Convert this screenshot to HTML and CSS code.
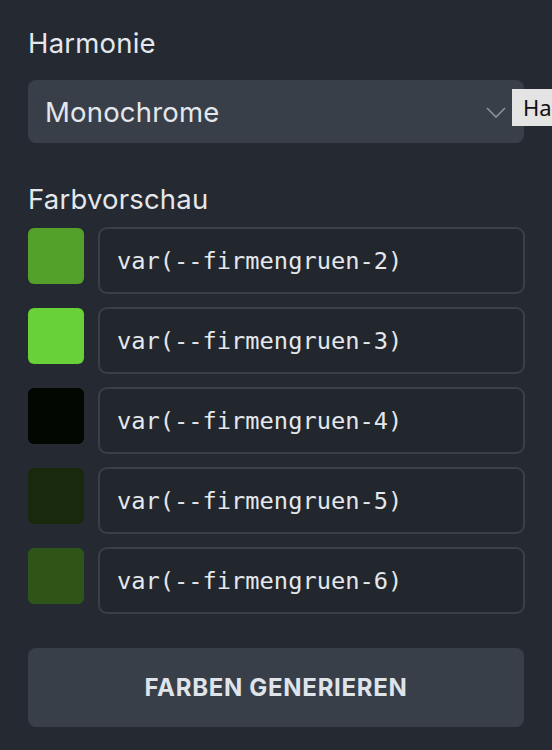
FILE: index.html
```html
<!DOCTYPE html>
<html lang="de">
<head>
<meta charset="utf-8">
<link rel="stylesheet" href="styles.css">
</head>
<body>
<div class="panel">
  <label class="field-label">Harmonie</label>
  <div class="select-wrap">
    <div class="select">
      <span>Monochrome</span>
      <svg class="chevron" width="20" height="12" viewBox="0 0 20 12"><polyline points="1,1 10,10 19,1" fill="none" stroke="#8b919b" stroke-width="1.6"/></svg>
    </div>
    <div class="tooltip">Harmonie</div>
  </div>

  <label class="field-label preview-label">Farbvorschau</label>
  <div class="rows">
    <div class="row"><div class="swatch" style="background:#53a12a"></div><div class="code">var(--firmengruen-2)</div></div>
    <div class="row"><div class="swatch" style="background:#67d137"></div><div class="code">var(--firmengruen-3)</div></div>
    <div class="row"><div class="swatch" style="background:#020702"></div><div class="code">var(--firmengruen-4)</div></div>
    <div class="row"><div class="swatch" style="background:#19290d"></div><div class="code">var(--firmengruen-5)</div></div>
    <div class="row"><div class="swatch" style="background:#2e5517"></div><div class="code">var(--firmengruen-6)</div></div>
  </div>

  <button class="generate">FARBEN GENERIEREN</button>
</div>
</body>
</html>
```
FILE: styles.css
```css
html, body {
  margin: 0;
  padding: 0;
  background: #242932;
  overflow: hidden;
}
body {
  font-family: Inter, "Noto Sans", sans-serif;
  color: #e4e7ec;
}
.panel {
  padding: 27px 28px 0 28px;
  display: flex;
  flex-direction: column;
}
.field-label {
  display: block;
  font-size: 27.5px;
  line-height: 32px;
  letter-spacing: 0.2px;
  color: #e4e7ec;
}
.select-wrap {
  position: relative;
  margin-top: 21px;
}
.select {
  height: 63px;
  background: #393f49;
  border-radius: 8px;
  display: flex;
  align-items: center;
  justify-content: space-between;
  padding: 0 18px 0 17px;
  font-size: 27.5px;
  letter-spacing: 0.2px;
  color: #e4e7ec;
}
.chevron {
  display: block;
  margin-top: 2px;
}
.tooltip {
  position: absolute;
  left: 484px;
  top: 9px;
  height: 37px;
  width: 120px;
  background: #e4e4e4;
  color: #111;
  font-family: "Noto Sans", Inter, sans-serif;
  font-size: 22px;
  line-height: 37px;
  padding-left: 11px;
  box-sizing: border-box;
  white-space: nowrap;
}
.preview-label {
  margin-top: 40px;
}
.rows {
  display: flex;
  flex-direction: column;
  gap: 13px;
  margin-top: 12px;
}
.row {
  display: flex;
  align-items: flex-start;
  gap: 14px;
}
.swatch {
  width: 56px;
  height: 56px;
  border-radius: 6px;
  margin-top: 1px;
  flex: none;
}
.code {
  flex: 1;
  height: 67px;
  box-sizing: border-box;
  border: 2px solid #3a3f48;
  border-radius: 9px;
  background: #22262d;
  display: flex;
  align-items: center;
  padding-left: 17px;
  font-family: "DejaVu Sans Mono", "Liberation Mono", monospace;
  font-size: 23.7px;
  color: #e4e7ec;
  margin-right: -1px;
}
.generate {
  margin-top: 34px;
  height: 79px;
  border: none;
  border-radius: 8px;
  background: #393f49;
  color: #dfe3ea;
  font-family: Inter, "Noto Sans", sans-serif;
  font-weight: 700;
  font-size: 24px;
  letter-spacing: 0.7px;
  width: 100%;
}
```
